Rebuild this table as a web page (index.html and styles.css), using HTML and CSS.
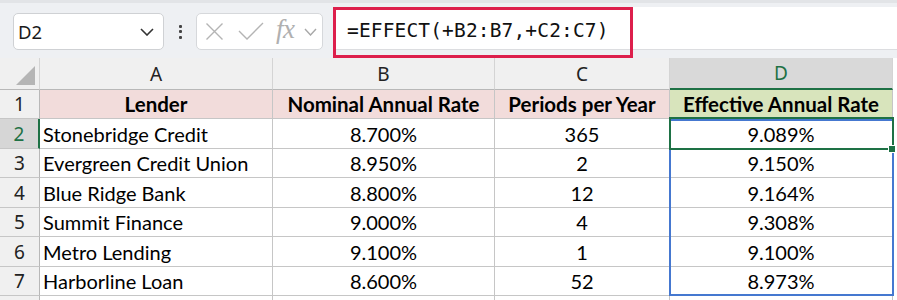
FILE: index.html
```html
<!DOCTYPE html>
<html>
<head>
<meta charset="utf-8">
<link rel="stylesheet" href="styles.css">
</head>
<body>
<div class="toolbar">
  <div class="namebox">
    <span class="nb-text">D2</span>
    <svg class="nb-chev" width="14" height="8" viewBox="0 0 14 8"><polyline points="1,1 7,7 13,1" fill="none" stroke="#333" stroke-width="1.6"/></svg>
  </div>
  <div class="dots"><i></i><i></i><i></i></div>
  <div class="fxbox">
    <svg width="19" height="19" viewBox="0 0 19 19" class="ic-x"><path d="M1.5 1.5 L17.5 17.5 M17.5 1.5 L1.5 17.5" stroke="#b4b4b4" stroke-width="1.4" fill="none"/></svg>
    <svg width="26" height="19" viewBox="0 0 26 19" class="ic-check"><polyline points="1,9 9,17 25,1" stroke="#b4b4b4" stroke-width="1.4" fill="none"/></svg>
    <span class="fx">fx</span>
    <svg width="13" height="8" viewBox="0 0 13 8" class="ic-chev"><polyline points="1,1 6.5,7 12,1" fill="none" stroke="#a8a8a8" stroke-width="1.4"/></svg>
  </div>
  <div class="formula">
    <span class="ftext">=EFFECT(+B2:B7,+C2:C7)</span>
  </div>
</div>
<div class="sheet">
  <div class="row colhead">
    <div class="c rh corner"><span class="tri"></span></div>
    <div class="c cA">A</div>
    <div class="c cB">B</div>
    <div class="c cC">C</div>
    <div class="c cD sel">D</div>
  </div>
  <div class="row r1">
    <div class="c rh">1</div>
    <div class="c cA hd">Lender</div>
    <div class="c cB hd">Nominal Annual Rate</div>
    <div class="c cC hd">Periods per Year</div>
    <div class="c cD hd hdg">Effective Annual Rate</div>
  </div>
  <div class="row r2">
    <div class="c rh rsel">2</div>
    <div class="c cA tl">Stonebridge Credit</div>
    <div class="c cB">8.700%</div>
    <div class="c cC">365</div>
    <div class="c cD">9.089%</div>
  </div>
  <div class="row r1">
    <div class="c rh">3</div>
    <div class="c cA tl">Evergreen Credit Union</div>
    <div class="c cB">8.950%</div>
    <div class="c cC">2</div>
    <div class="c cD">9.150%</div>
  </div>
  <div class="row r2">
    <div class="c rh">4</div>
    <div class="c cA tl">Blue Ridge Bank</div>
    <div class="c cB">8.800%</div>
    <div class="c cC">12</div>
    <div class="c cD">9.164%</div>
  </div>
  <div class="row r1">
    <div class="c rh">5</div>
    <div class="c cA tl">Summit Finance</div>
    <div class="c cB">9.000%</div>
    <div class="c cC">4</div>
    <div class="c cD">9.308%</div>
  </div>
  <div class="row r2">
    <div class="c rh">6</div>
    <div class="c cA tl">Metro Lending</div>
    <div class="c cB">9.100%</div>
    <div class="c cC">1</div>
    <div class="c cD">9.100%</div>
  </div>
  <div class="row r1">
    <div class="c rh">7</div>
    <div class="c cA tl">Harborline Loan</div>
    <div class="c cB">8.600%</div>
    <div class="c cC">52</div>
    <div class="c cD">8.973%</div>
  </div>
  <div class="row rlast">
    <div class="c rh"></div>
    <div class="c cA"></div>
    <div class="c cB"></div>
    <div class="c cC"></div>
    <div class="c cD"></div>
  </div>
  <div class="range"></div>
  <div class="active"></div>
  <div class="handle"></div>
</div>
</body>
</html>
```
FILE: styles.css
```css
* { box-sizing: border-box; }
html, body { margin: 0; padding: 0; background: #ffffff; }
body { width: 897px; height: 300px; overflow: hidden; font-family: "Lato", sans-serif; }

.toolbar {
  position: relative;
  height: 58px;
  background: #eef0f3;
  border-top: 3px solid #e2e4e7;
  display: flex;
  align-items: flex-start;
  padding-top: 10px;
  padding-left: 13px;
}
.namebox {
  width: 151px;
  height: 37px;
  background: #fff;
  border: 1px solid #cfd1d4;
  border-radius: 5px;
  display: flex;
  align-items: center;
  justify-content: space-between;
  padding: 0 9px 0 4px;
}
.nb-text { font-family: "Noto Sans", sans-serif; font-size: 18.5px; color: #1a1a1a; }
.nb-chev { display: block; }
.dots {
  width: 32px;
  height: 37px;
  display: flex;
  flex-direction: column;
  align-items: center;
  justify-content: center;
  gap: 2.5px;
}
.dots i { display: block; width: 3px; height: 3px; background: #444; border-radius: 1px; }
.fxbox {
  width: 127px;
  height: 37px;
  background: #fff;
  border: 1px solid #d6d8db;
  border-radius: 5px;
  display: flex;
  align-items: center;
  padding-left: 8px;
}
.ic-x { margin-right: 14px; }
.ic-check { margin-right: 12px; }
.fx { font-family: "Liberation Serif", serif; font-style: italic; font-size: 27px; color: #b0b0b0; margin-top: -5px; letter-spacing: -0.5px; }
.ic-chev { margin-left: 9px; }
.formula {
  flex: 1;
  margin-left: 10px;
  margin-top: -6px;
  height: 43px;
  background: #fff;
  border-bottom: 1px solid #dcdde0;
  position: relative;
}
.formula::before {
  content: "";
  position: absolute;
  left: 0; top: 0;
  width: 294px; height: 45px;
  border: 3px solid #dd1f4c;
}
.ftext {
  position: relative;
  display: block;
  padding: 12px 0 0 14px;
  font-family: "DejaVu Sans Mono", monospace;
  font-size: 19.5px;
  letter-spacing: 0.15px;
  color: #111;
}

.sheet { position: relative; }
.row { display: flex; height: 29px; }
.row.r2 { height: 30px; }
.row.colhead { height: 32px; }
.row.rlast { height: 4px; }
.c {
  border-right: 1px solid #c6c6c6;
  border-bottom: 1px solid #c6c6c6;
  display: flex;
  align-items: center;
  justify-content: center;
  font-size: 20px;
  color: #000;
  white-space: nowrap;
  overflow: hidden;
}
.rh { width: 40px; background: #f0f0f0; font-family: "Noto Sans", sans-serif; font-size: 19px; color: #222; border-right-color: #b8b8b8; }
.cA { width: 233px; }
.cB { width: 222px; }
.cC { width: 175px; }
.cD { width: 223px; }
.tl { justify-content: flex-start; padding-left: 3px; }

.colhead .c {
  background: #f0f0f0;
  font-family: "Noto Sans", sans-serif;
  font-size: 19px;
  color: #222;
  border-right-color: #d4d4d4;
  border-bottom-color: #b8b8b8;
}
.colhead .c.sel {
  background: #d9d9d9;
  color: #1e7145;
  border-bottom: 2px solid #1e7145;
}
.corner { position: relative; }
.tri {
  position: absolute;
  right: 4px; bottom: 4px;
  width: 0; height: 0;
  border-left: 19px solid transparent;
  border-bottom: 19px solid #b5b5b5;
}
.rh.rsel { background: #d6d6d6; color: #1e7145; border-right: 2px solid #1e7145; width: 40px; }

.hd { background: #f2dcdb; font-weight: 700; font-size: 20.5px; }
.hdg { background: #d8e4bc; }
.rlast .c { border-bottom: none; }

.range {
  position: absolute;
  left: 669px; top: 61px;
  width: 225px; height: 177px;
  border: 2px solid #4578d0;
}
.active {
  position: absolute;
  left: 669px; top: 59px;
  width: 225px; height: 33px;
  border: 2px solid #1e7145;
}
.handle {
  position: absolute;
  left: 888px; top: 87px;
  width: 8px; height: 8px;
  background: #1e7145;
  border: 1px solid #fff;
}
```
